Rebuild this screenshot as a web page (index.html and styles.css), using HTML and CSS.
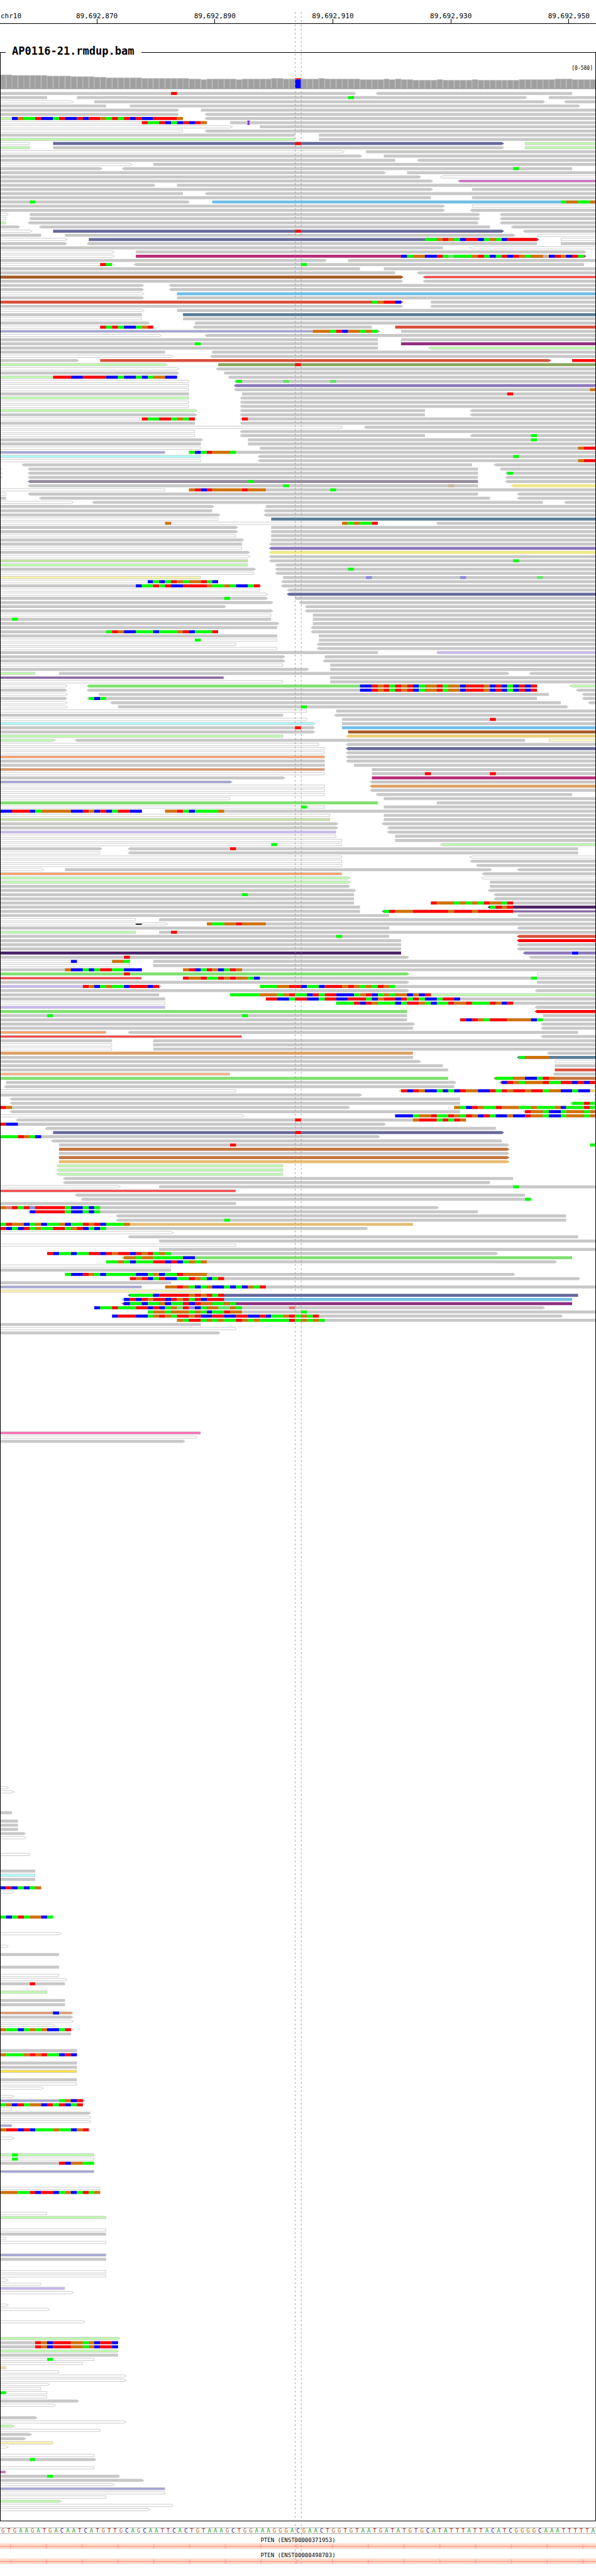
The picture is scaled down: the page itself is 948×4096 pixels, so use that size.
FILE: index.html
```html
<!DOCTYPE html>
<html lang="en">
<head>
<meta charset="utf-8">
<title>AP0116-21.rmdup.bam – chr10</title>
<link rel="stylesheet" href="styles.css">
</head>
<body>
<main class="browser">
  <header class="ruler">
    <span class="ruler-chrom">chr10</span>
    <span class="ruler-tick">89,692,870</span>
    <span class="ruler-tick">89,692,890</span>
    <span class="ruler-tick">89,692,910</span>
    <span class="ruler-tick">89,692,930</span>
    <span class="ruler-tick">89,692,950</span>
  </header>

  <fieldset class="track">
    <legend class="track-name">AP0116-21.rmdup.bam</legend>
    <p class="track-range">[0-580]</p>
    <svg class="pileup" id="pileup" viewBox="1 120 998 4108" role="img" aria-label="Coverage and aligned reads"></svg>
  </fieldset>

  <div class="sequence" id="sequence"></div>

  <section class="gene">
    <h2 class="gene-name">PTEN (ENST00000371953)</h2>
    <svg class="gene-model" viewBox="0 0 1000 9" preserveAspectRatio="none" aria-hidden="true"></svg>
  </section>
  <section class="gene">
    <h2 class="gene-name">PTEN (ENST00000498703)</h2>
    <svg class="gene-model" viewBox="0 0 1000 9" preserveAspectRatio="none" aria-hidden="true"></svg>
  </section>

  <svg class="guides" viewBox="0 0 1000 4280" aria-hidden="true">
    <path d="M495.5 0V4280M505.5 0V4280"/>
  </svg>
</main>
<script src="script.js"></script>
</body>
</html>
```

FILE: styles.css
```css
* {
  box-sizing: border-box;
}

body {
  margin: 0;
  background: #fff;
  color: #000;
  font-family: "DejaVu Sans Mono", monospace;
}

.browser {
  position: relative;
  padding-bottom: 19px;
}

/* Ruler: a 20-base cell is centred on each tick */
.ruler {
  display: flex;
  margin-bottom: 33px;
  padding-top: 20px;
  border-bottom: 1px solid #000;
  overflow: hidden;
  font-size: 11px;
  line-height: 12px;
}

.ruler-chrom {
  flex: 0 0 6.35%;
  padding-left: 1px;
}

.ruler-tick {
  flex: 0 0 19.8%;
  display: flex;
  flex-direction: column;
  align-items: center;
}

.ruler-tick::after {
  content: "";
  width: 1px;
  height: 7px;
  margin-top: -2px;
  background: #000;
}

/* Alignment track */
.track {
  min-width: 0;
  margin: 0;
  padding: 0;
  border: 1px solid #000;
}

.track-name {
  margin-left: 8px;
  padding: 0 12px 4px 10px;
  font-size: 17px;
  font-weight: bold;
  line-height: 20px;
}

.track-range {
  margin: 0;
  padding: 9px 4px 0 0;
  font-size: 8px;
  line-height: 10px;
  text-align: right;
}

.pileup {
  display: block;
  width: 100%;
  height: auto;
}

.cov-edge { fill: #b0b0b0; }
.cov-bar { fill: #a0a0a0; }
.cov-base { fill: #777; }

.read { fill: #c8c8c8; }
.read.outlined { stroke: #c8c8c8; stroke-width: 1; }

.white { fill: #fff; }
.lime { fill: #bbffaa; }
.sage { fill: #c3e5a0; }
.aqua { fill: #aaffff; }
.peri { fill: #a2a4d8; }
.lav { fill: #c8b6f4; }
.violet { fill: #8963a8; }
.orchid { fill: #cf66be; }
.pink { fill: #ff69b4; }
.coral { fill: #ff4040; }
.orange { fill: #ffa062; }
.copper { fill: #e09664; }
.peach { fill: #ffb07a; }
.apricot { fill: #ffd8a0; }
.cream { fill: #fff6a8; }
.ivory { fill: #ffffbe; }
.lemon { fill: #ffe23c; }

.slate { fill: #66699b; }
.sky { fill: #70bee6; }
.steel { fill: #587e98; }
.magenta { fill: #ba2c78; }
.plum { fill: #902e80; }
.brown { fill: #a65a24; }
.tomato { fill: #d8503a; }
.red { fill: #ff0000; }
.olive { fill: #88a660; }
.purple { fill: #8c78ba; }
.indigo { fill: #4c246a; }
.mauve { fill: #968a9e; }
.straw { fill: #f0e888; }
.wheat { fill: #ead078; }
.tan { fill: #dca066; }
.gold { fill: #e8bc70; }
.sienna { fill: #c47440; }
.green { fill: #80e070; }

.base-A { fill: #00ff00; }
.base-C { fill: #0000ff; }
.base-G { fill: #d17105; }
.base-T { fill: #ff0000; }
.base-a { fill: #64e464; }
.base-c { fill: #8c8cdc; }
.base-g { fill: #cbb49a; }
.base-t { fill: #e07474; }
.insertion { fill: #7a1fd8; }
.deletion { fill: #000; }

/* Reference sequence */
.sequence {
  display: grid;
  grid-template-columns: repeat(101, minmax(0, 1fr));
  margin-top: 10px;
  border: solid #aaa;
  border-width: 1px 0;
  font-size: 9px;
  line-height: 8px;
  text-align: center;
}

.nt-A { color: #1f9b1f; }
.nt-C { color: #16168c; }
.nt-G { color: #b06a1c; }
.nt-T { color: #b01c1c; }

/* Transcripts */
.gene {
  padding-top: 6px;
}

.gene-name {
  margin: 0;
  font-size: 9px;
  font-weight: normal;
  line-height: 9px;
  text-align: center;
}

.gene-model {
  display: block;
  width: 100%;
  height: 9px;
  background: #ffdccc;
}

.gene-model path {
  fill: #ffa898;
}

/* Centre-position guides, drawn over every track */
.guides {
  position: absolute;
  top: 19px;
  left: 0;
  width: 100%;
  height: auto;
  pointer-events: none;
}

.guides path {
  fill: none;
  stroke: #999;
  stroke-width: 1;
  stroke-dasharray: 3 4;
}
```

FILE: script.js
```js
// One line per pileup row, reads separated by spaces:
//   [colour:][<]start-end[>][@pos+bases]...
// Positions are base columns 0..101; an empty start or end runs off the view.
// Upper-case bases are high quality, lower-case are low quality, I is an insertion.
// "#n" continues at row n.
const READS = `-60>@29T <64-97
-8 13-89>@59A 93-
white:-12> 16-92> <96-
-18 22-98>
-30> 34-
-30> <35-
lime:-31@2CGAATCCATCCTCTTGATATCTCCTTTTG <35-
white:-35@24TAATCACTCTG 39-@42I
white:-39> 44-
white:-31 <35-
-50 54-
lime:-50 54-
white:-5 slate:9-85>@50T lime:89-
lime:-5 9-85> lime:89-
white:-58> 62-
-61> 65-
-67 <71-
white:-22> 26-
-17> <21-97@87A
-65> 69-
-71> white:<75-
-73> orchid:<78-
-26> 30-
-73> 80-
-31 <35-
-73 80-
-32@5A sky:36-@95AGGAAG
-75> white:80-
-75> <80-
white:-1> 5-81> <85-
white:-1 5-81> <85-
lime:-1 <5-81 <85-
-3> <7-83 <87-
white:-5> slate:9-85>@50T <89-
-7 11-87> white:91-
white:-11> slate:15-91>@72AAGTGACTTCAGACTTTTT white:95-
-11> <15-91 95-
-75 white:<80-
white:-19> 23-99>
white:-19> magenta:23-99>@68CAGGCCTAaAAAGTACATCTGAGGgCTGCTA
-55> 59-
white:-19>@17TA <23-99@51A
-61 65-
-67 <71-
brown:-68> coral:<72-
-68> <72-
-24> <29-
-24> <29-
white:-24> sky:30-
-24> 30-
tomato:-68>@63AGTTC 73-
-68> 73-
white:-24> 30-
-24 steel:31-
white:-24 31-
-25> 33-
white:-26@17TATACCAGT <33-63 tomato:67-
peri:-64>@53GGGATCGGAGA 68-
white:-27> <35-
-64 68-
-64@33A plum:68-
-64 lime:<73-
-28 36-
white:-29> <36-
-13> tomato:17-93> red:97-
lime:-28> olive:37-@50T
white:-30> <37-
-30> 38-
lime:-30@9TTTCCTTTTCCACCACAGGCC <39-
white:-32 <40-@40A@48a@56a
white:-32 purple:<40-
white:-32 <40-@100G
-32 41-@86T
lime:-32 <41-
white:-32 <41-
white:-32 <41-
lime:-33> <41-72 <80-
-33> <41-72 <80-
white:-33@24TAATTAGAT <41-@41T
-33 <41-
white:-58 <62-
white:-33 <41-
white:-33 <41-72 <80-@90A
-34> 42-@90A
-34 42-
white:-34 44-@98GTT
peri:-28 32-@32ACATGGGA
aqua:-34 <44-@87A
white:-34 <44-@98GTT
<4-80 <84-
white:-0> <5-81 <85-
white:-0> <5-81 <86-@86A
white:-0> <5-81 <86-
mauve:<5-81@42A <86-
<5-81@48A@76g straw:<87-
white:-28 32-@32GTCTGGGGGTGGG@56A
white:-1 <5-81 <88-
-1 <7-83 <88-
white:-12> <16-92 <96-
-36> 45-
-36 <45-
-37> <45-
white:-37 steel:46-
white:-64@28G@58GAGAAT 74-
-40> 46-
-40> 46-
white:-40 46-
-41> 46-
-41 <46-
white:-41 purple:<46-
-42> straw:<46-
white:-42> <46-
sage:-42 <46-@87A
lime:-42 <47-
-43> <47-@59A
white:-43 <47-
cream:-34 48-@62c@78c@91a
white:-37@25CACATGAGGTAC <48-
-44>@23CAATATCCTTTTGAAGACCAT <48-
white:-44 <49-
white:-45> slate:<49-
-45>@38A 50-
-46> <51-
-38> <52-
-46> <52-
white:-46 53-
-46@2A 53-
-47> 53-
-47 <53-
-37@18ATGCCAAACAAAGTCAAAT <53-
-47 54-
white:-47@33A 54-
white:-40 <54-
white:-47 <54-
-64 lav:74-
-48> 55-
-48> <55-
white:-48 56-
-52> 56-
lime:-6 10-86> <90-
violet:-38 56-
white:-48 56-
white:-11> green:<15-91@61CCTGTATGTCAGGTAGGCTTTGCTCACTCT lime:<97-
-11> <15-91@61CCTGTATGTCAGGTAGGCTTTGCTCACTCT <98-
white:-11> <17-93 <99-
-11> <15-91@15ACA <99-
white:-11> <19-95 <100-
white:-11> 20-96>@51A
white:-52 57-
-48 <57-
white:-52 58-@83T
aqua:-53> 58-
-53>@50T sky:58-
-53> brown:59-
lime:-48 wheat:<59-
lime:-9> <13-89 ivory:93-
white:-54 <59-
white:-55 slate:<59-
white:-55 <59-
orange:-55 <59-
-55 <59-
-55 60-
copper:-55 63-
white:-55 63-@72T@83T
-48> magenta:63-
peri:-39> <63-
white:-55 tan:<63-
white:-55 <63-
white:-55 <64-97
white:-39 65-
green:-64 74-
white:-55@51A 65-
-24@0CCTTTCAGGGGGCCTGCTCATTCC 28-@28GGTACAAAAG
white:-56 65-
sage:-56 65-
-57> <65-
-57> <66-
lav:-57 <66-
white:-57 67-
white:-58 67-
white:-58@46A lime:<75-
-17> <22-98@39T
white:-17 <22-98
white:-58 white:<80-
white:-58 <80-
white:-58 <81-
white:-7> 11-83> <88-
orange:-58 <82-
lime:-59> white:<82-
lime:-59> 83-
-59> 83-
-60> <83-
-60@41A <84-
-60 <84-
-60 73-@73TGGGAGAGATGGAT
-61 indigo:<83-@83ATGT
-61 violet:<65-@65ATGGGTTTTTTGTTTGTTTTTT
-66 <88-
white:-23 27-
white:-23 deletion:23-24 white:24-28> 35-@35GAAGGTGGGG
-66 <88-
lime:-23 27-@29T
-66@57A tomato:<88-
-68 red:<88-
-68 <88-
-68 <88-
indigo:-68 purple:<89-@97C
-69>@21T <90-
white:-22@12C@19GGA 26-
white:-22 26-
-24@11GCCACATTAACCC 31-@31GTCATGCATG
green:-69>@21T white:91-
coral:-24 31-@31TGGTAATGTGGAC@90A
-69> 91-
lav:-27>@14TGCAGAACTTTCT 44-@44AAAGGTTCAACTTTGTGAGATGA
-69> <91-
-27 lime:39-@39AAAAAGGGAGTAACTATTCCCAGTCAGAGGCGCT
-28 45-@45TTCCATTCCATTCCTTTACGTTCTATACCATTC
white:-28 57-@57AAATCTGAAACATTGACAATGGTAAATGCT
lav:-28 <91-
green:-69 red:<91-
-69@8A@41A 92-
-69 78-@78TCTGATTTGGGGCA
-70> <92-
-70 <92-
orange:-18 <22-98
coral:-41 <92-
-19 26-
white:-19 26-
white:-19 26-
tan:-70 <93-
-70 steel:<88-@88AGGGG
-71> white:94-
-75 94-
-76 tomato:94-
peach:-39 <94-
green:-76 sienna:<84-@84AAAGGCCATG
1-77> brown:<85-@85CTGAGGGTAATTCTCT
<1-77 <101-
white:-40 lemon:<68-@68TCTGCCACACTGGCCTATGTTGTTAGGCCACC
-61> <101-
<2-78 <101-
<2-78 <97-@97AATA
-59>@0TG 77-@77GACTGAATGGGAAGAAAGCAAATA
<2-78 <89-@89TGGACCAGGGAG
white:-41> 67-@67CCCAGGTAATGATGCTACCGCCTGGACCAGGGAG
<3-79@50T@70GTTTATATG
-65>@0TCC
<8-84
slate:9-85>@50T
-64>@0AAATGAC
<9-85
10-86>@39T 100-@100A
sienna:10-86>
10-86>
sienna:10-86>
gold:10-86>
lime:<10-48
lime:<10-48
lime:<10-48
<11-87
<11-83
white:-20> 27-@87A
coral:-40
<13-89
<14-90@89A
-40
-74>@0GtTATcTTTTTACCACA
<5-81@5CTTTTTACCACA
<20-96
<20-96@38A
gold:-70@0ATGGCAGCAAGCAATGTCAAAG
-62>@0TCACTAGAATTAGTCACA
white:-29>
<22-98
27-
white:-40
27-
8-84>@8TCAACAATTCTGTTCTGTAGA
green:<21-97@21GGAGGAAAAACC
18-94>@18AAGACAAATTCTCAGAG
white:-29
-29
11-87>@11ACCTGACAAAAACCAGCAATGGGG
22-98>@22TGTCATCCAATGACAT
-29
peri:-24 28-@28GGTGACAGCCACACGAT
cream:-34
slate:<22-98@22AAAACTTTTTGTGTAT
sky:<21-97@21CTCTGTTCTGTATCTTT
plum:<21-97@21CAACAAGCAATCTGGAAGA
16-92>@16CAATAAATTCTCAGaTcCAGGaaGA@49t
25-@25AGGAGGGAGACAATGG@51A
19-95>@19CTTTCCAGTGATTGTCCTTCCTTCCTCAAGTAGAT
30-@30GATTAGAGAATGAGAAAAATAGAGA
-34
white:-40
-37>
#321
pink:-34
white:-33>
-31>
#406
white:-1>
white:-2>
#412
-2
#414
-3
-3
-3
-4>
white:-4>
#422
white:-5
#426
-6
aqua:-6
-6
#430
white:-7@0CTCACAG
white:-2>
#437
white:-9>@0ACATAGGCA
#441
white:-10>
#444
white:-1>
#446
-10
#449
-10
#451
white:-10
white:-11>
-11@5T
#455
lime:-8
#457
-11
-11
#460
copper:-12>@9C
-12>
white:-12>
white:-9>
white:-12>@0GAACAGAGCCAT
-12
#469
-13
white:-13@0GAAAGTGTAACTC
#472
-13
-13
lemon:-13
#476
-13
white:-13
white:-7>
#480
white:-2>
peri:-14>@10AGCT
white:-14@0AGCTAGGCTATCAT
white:-2
-15>
white:-15>
white:-15>
peri:-2
white:-15@0GTTCTCAAAGAACGT
#490
white:-2>
#494
lime:-16@2A
white:-16@2A
-16@10TCGGAA
#498
peri:-16
#502
white:-17
white:-17@0GGGAATCTTCAGCATAG
#508
white:-8
lime:-18
#512
white:-18
-18
white:-1
white:-18
#518
peri:-18
-18
#522
white:-18
white:-18
white:-1>
white:-7
lav:-11
white:-12>
#530
white:-1>
white:-8>
#534
white:-14>
#538
lime:-20>
-20@6TGCTTTGGAGCTTC
-20@6TGCTTTGGAGCTTC
lime:-20
-20
white:-16@8A
white:-14
apricot:-1
white:-10
white:-21>
white:-21>
white:-8>
white:-7
white:-8@0A
white:-8
-13>
white:-9>
#557
-6>
white:-21>
lime:-2>
white:-17
-5>
-4>
cream:-9
white:-1>
#566
white:-16
-16>@5A
#569
white:-16
orchid:-1
-20>@8A
-24>
white:-19>
peri:-28
white:-28
white:-18
lime:-10>
white:-29>
white:-25>`;

// Top edge of each coverage bar, as [columns, y].
const COVERAGE = [
  [2, 125], [6, 126], [4, 127], [4, 128], [2, 129], [6, 130], [8, 131], [2, 132],
  [1, 133], [5, 132], [1, 133], [5, 132], [2, 131], [2, 132], [1, 131], [3, 132],
  [1, 131], [6, 132], [4, 133], [1, 132], [1, 133], [1, 132], [2, 133], [4, 134],
  [1, 133], [5, 134], [1, 133], [7, 134], [6, 133], [3, 132], [4, 133]
];

const SEQUENCE =
  "GTGAAGATGACAATCATGTTGCAGCAATTCACTGTAAAGCTGGAAAGGGAC" +
  "GAACTGGTGTAATGATATGTGCATATTTATTACATCGGGGCAAATTTTTA";

const OUTLINED = new Set([
  "white", "lime", "sage", "aqua", "peri", "lav", "violet", "orchid", "pink",
  "coral", "orange", "copper", "peach", "apricot", "cream", "ivory", "lemon"
]);

const BASES = 101;
const VARIANT_COLUMN = 50;
const COVERAGE_FLOOR = 148;
const FIRST_ROW = 154;
const ROW_PITCH = 7;
const READ_HEIGHT = 5;
const ARROW = 4;

const columnX = (column) => Math.round((column * 1000) / BASES);

const rect = (cls, x, y, w, h) =>
  `<rect class="${cls}" x="${x}" y="${y}" width="${w}" height="${h}"/>`;

function drawCoverage() {
  let out = "";
  let column = 0;
  for (const [count, top] of COVERAGE) {
    for (let i = 0; i < count; i++, column++) {
      const x = columnX(column);
      const w = columnX(column + 1) - x;
      if (column === VARIANT_COLUMN) {
        out += rect("base-T", x, top, w, 2);
        out += rect("base-C", x, top + 2, w, COVERAGE_FLOOR - top - 2);
      } else {
        out += rect("cov-edge", x, top, w, COVERAGE_FLOOR - top);
        out += rect("cov-bar", x + 1, top + 1, w - 2, COVERAGE_FLOOR - top - 1);
      }
    }
  }
  return out + rect("cov-base", 0, COVERAGE_FLOOR, 1000, 1);
}

function drawBases(start, bases, y) {
  if (bases === "I") {
    const x = columnX(start) - 1;
    return rect("insertion", x, y - 1, 4, 2) +
      rect("insertion", x + 1, y, 2, 6) +
      rect("insertion", x, y + 4, 4, 2);
  }
  let out = "";
  let at = start;
  for (const run of bases.match(/(.)\1*/g)) {
    const x = columnX(at);
    at += run.length;
    out += rect(`base-${run[0]}`, x, y, columnX(at) - x, READ_HEIGHT);
  }
  return out;
}

function drawRead(text, y) {
  const [, colour, left, start, end, right, marks] =
    text.match(/^(?:(\w+):)?(<?)(\d*)-(\d*)(>?)(.*)$/);
  let x0 = start === "" ? -10 : columnX(+start);
  let x1 = end === "" ? 1010 : columnX(+end);

  if (colour === "deletion") {
    return rect("deletion", x0, y + 2, x1 - x0, 2);
  }

  const outlined = OUTLINED.has(colour);
  const inset = outlined ? 0.5 : 0;
  const top = y + inset;
  const bottom = y + READ_HEIGHT - inset;
  const middle = y + READ_HEIGHT / 2;
  if (!left) x0 += inset;
  if (!right) x1 -= inset;

  let d = `M${x0} ${top}H${x1}`;
  if (right) d += `L${x1 + ARROW} ${middle}L${x1} ${bottom}`;
  else d += `V${bottom}`;
  d += `H${x0}`;
  if (left) d += `L${x0 - ARROW} ${middle}`;
  d += "Z";

  const classes = ["read", outlined ? "outlined" : "", colour || ""].filter(Boolean).join(" ");
  let out = `<path class="${classes}" d="${d}"/>`;
  for (const mark of marks.split("@").filter(Boolean)) {
    const [, position, bases] = mark.match(/^(\d+)([A-Za-z]+)$/);
    out += drawBases(+position, bases, y);
  }
  return out;
}

function drawReads() {
  let out = "";
  let row = 0;
  for (const line of READS.split("\n")) {
    if (line[0] === "#") {
      row = +line.slice(1);
      continue;
    }
    const y = FIRST_ROW + row * ROW_PITCH;
    for (const read of line.split(" ")) out += drawRead(read, y);
    row++;
  }
  return out;
}

document.getElementById("pileup").innerHTML = drawCoverage() + drawReads();

document.getElementById("sequence").innerHTML = [...SEQUENCE]
  .map((base) => `<span class="nt-${base}">${base}</span>`)
  .join("");

let model = "M0 4H1000V6H0Z";
for (let x = 17; x < 1000; x += 60) model += `M${x} 1L${x + 4} 5L${x} 9Z`;
for (const svg of document.querySelectorAll(".gene-model")) {
  svg.innerHTML = `<path d="${model}"/>`;
}
```
